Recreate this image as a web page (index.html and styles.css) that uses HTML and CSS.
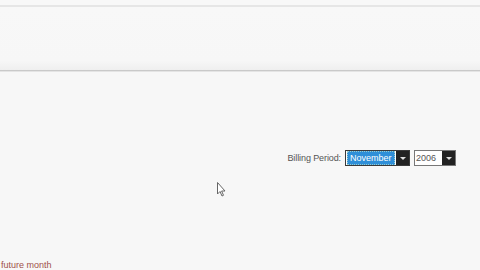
FILE: index.html
```html
<!DOCTYPE html>
<html lang="en">
	<head>
		<meta charset="UTF-8" />
		<meta name="viewport" content="width=device-width, initial-scale=1.0" />
		<link rel="stylesheet" href="styles.css">
		<title>Billing</title>
	</head>
	<body>
		<div class="topbar"></div>
		<div class="header"></div>
		<div class="main">
			<div class="period">
				<span class="label">Billing Period:</span>
				<div class="sel month">
					<span class="val"><span class="hl">November</span></span>
					<span class="arrow"></span>
				</div>
				<div class="sel year">
					<span class="val">2006</span>
					<span class="arrow"></span>
				</div>
			</div>
			<svg class="cursor" width="10" height="16" viewBox="0 0 10 16">
				<path d="M0.5 0.5 L0.5 12 L3 9.5 L5 14 L6.5 13.3 L4.6 9 L8 9 Z" fill="#fff" stroke="#666" stroke-width="1" />
			</svg>
			<div class="note">future month</div>
		</div>
	</body>
</html>
```

FILE: styles.css
```css
* {
	margin: 0;
	padding: 0;
	box-sizing: border-box;
}
body {
	width: 480px;
	height: 270px;
	overflow: hidden;
	background-color: #f7f7f7;
	font-family: "Liberation Sans", Arial, sans-serif;
}
.topbar {
	height: 7px;
	border-bottom: 2px solid #e6e6e6;
	background-color: #f8f8f8;
}
.header {
	height: 64px;
	background: linear-gradient(#f8f8f8 0%, #f7f7f7 85%, #efefef 100%);
	border-bottom: 1px solid #c9c9c9;
	box-shadow: 0 1px 0 #e4e4e4;
}
.main {
	position: relative;
	height: 199px;
	padding-top: 79px;
}
.period {
	display: flex;
	align-items: center;
	justify-content: flex-end;
	padding-right: 24px;
	font-size: 9px;
}
.label {
	color: #555;
	margin-right: 4px;
	letter-spacing: -0.1px;
}
.sel {
	display: flex;
	height: 16px;
	border: 1px solid #3a3a3a;
	background-color: #fff;
}
.month {
	width: 65px;
	margin-right: 4px;
}
.year {
	width: 42px;
	border-color: #777;
}
.val {
	flex: 1;
	display: flex;
	align-items: center;
	padding-left: 1px;
	color: #555;
}
.hl {
	background-color: #2f8fd8;
	color: #fff;
	padding: 1px 2px;
	border: 1px dotted #9cc;
}
.arrow {
	position: relative;
	width: 13px;
	background-color: #222;
}
.arrow::after {
	content: "";
	position: absolute;
	left: 4px;
	top: 6px;
	border-left: 3px solid transparent;
	border-right: 3px solid transparent;
	border-top: 3px solid #ddd;
}
.cursor {
	position: absolute;
	left: 217px;
	top: 111px;
}
.note {
	position: absolute;
	left: 1px;
	bottom: 0;
	font-size: 9px;
	color: #a0504a;
	line-height: 10px;
}
```
